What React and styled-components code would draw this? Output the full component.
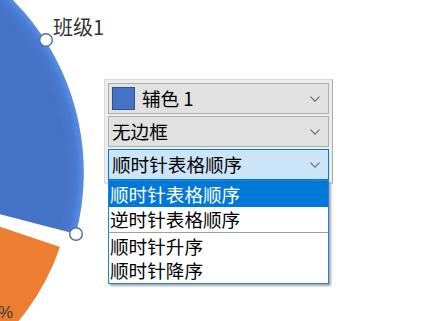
import React from "react";
import styled, { createGlobalStyle } from "styled-components";

const Global = createGlobalStyle`
  html, body { margin: 0; padding: 0; background: #ffffff; }
  * { box-sizing: border-box; }
`;

const CJK = `"Noto Sans CJK SC", "Noto Sans", sans-serif`;

const Canvas = styled.div`
  position: relative;
  width: 437px;
  height: 321px;
  overflow: hidden;
  background: #ffffff;
  font-family: ${CJK};
`;

const Chart = styled.svg`
  position: absolute;
  left: 0;
  top: 0;
`;

const SeriesLabel = styled.div`
  position: absolute;
  left: 53px;
  top: 15px;
  font-size: 20px;
  line-height: 24px;
  color: #333333;
  white-space: nowrap;
`;

const Editor = styled.div`
  position: absolute;
  left: 104px;
  top: 79px;
  width: 229px;
  height: 105px;
  display: flex;
  flex-direction: column;
  gap: 2px;
  padding: 3px 3px 0 3px;
  background: #ececec;
  border: 1px solid #dadada;
  border-right-color: #a9a9a9;
`;

const Combo = styled.div`
  height: 31px;
  display: flex;
  align-items: center;
  gap: 7px;
  padding: 0 8px 0 3px;
  background: ${(p) => (p.$active ? "#cce4f7" : "#e1e1e1")};
  border: 1px solid ${(p) => (p.$active ? "#0078d7" : "#adadad")};
  font-size: 18.6px;
  color: #000;
  white-space: nowrap;
`;

const ComboText = styled.span`
  flex: 1;
  line-height: 1;
`;

const Swatch = styled.span`
  width: 23px;
  height: 23px;
  flex: none;
  background: #4472c4;
  border: 1px solid #2f528f;
`;

const ListBox = styled.div`
  position: absolute;
  left: 108px;
  top: 180px;
  width: 221px;
  height: 104px;
  display: flex;
  flex-direction: column;
  background: #ffffff;
  border: 1px solid #2183d8;
  box-shadow: 2px 2px 2px rgba(0, 0, 0, 0.35);
`;

const Option = styled.div`
  height: ${(p) => p.$h}px;
  display: flex;
  align-items: center;
  padding-left: 1px;
  font-size: 18.6px;
  line-height: 1;
  white-space: nowrap;
  background: ${(p) => (p.$selected ? "#0078d7" : "#ffffff")};
  color: ${(p) => (p.$selected ? "#ffffff" : "#000000")};
`;

const Separator = styled.div`
  height: 2px;
  flex: none;
  border-top: 1px solid #a0a0a0;
  background: #ffffff;
`;

const Chevron = () => (
  <svg width="10" height="6" viewBox="0 0 10 6" style={{ flex: "none" }}>
    <polyline points="0.5,0.6 5,5.2 9.5,0.6" fill="none" stroke="#666666" strokeWidth="1.1" />
  </svg>
);

export default function App() {
  const cx = -161.6;
  const cy = 172.5;
  return (
    <Canvas>
      <Global />
      <Chart width="437" height="321" viewBox="0 0 437 321">
        <defs>
          <radialGradient id="blueG" gradientUnits="userSpaceOnUse" cx={cx} cy={cy} r="246">
            <stop offset="0" stopColor="#4472c4" />
            <stop offset="0.92" stopColor="#4472c4" />
            <stop offset="0.97" stopColor="#4a7bd1" />
            <stop offset="1" stopColor="#5b90e6" />
          </radialGradient>
        </defs>
        <path
          d={`M ${cx} ${cy} L 76 234 A 245.4 245.4 0 0 0 ${cx} ${cy - 245.4} Z`}
          fill="url(#blueG)"
        />
        <path
          d={`M ${cx} ${cy} L 60 247 A 232 232 0 0 1 ${cx} ${cy + 232} Z`}
          fill="#ed7d31"
        />
        <text x="13" y="318" textAnchor="end" fontSize="17" fill="#3a3a3a" fontFamily="Liberation Sans Narrow, Liberation Sans, sans-serif">4%</text>
        <circle cx="46" cy="40" r="6.3" fill="#ffffff" stroke="#4a6ea8" strokeWidth="1.4" />
        <circle cx="76" cy="234" r="6.3" fill="#ffffff" stroke="#4a6ea8" strokeWidth="1.4" />
      </Chart>
      <SeriesLabel>班级1</SeriesLabel>
      <Editor>
        <Combo>
          <Swatch />
          <ComboText>辅色 1</ComboText>
          <Chevron />
        </Combo>
        <Combo>
          <ComboText>无边框</ComboText>
          <Chevron />
        </Combo>
        <Combo $active>
          <ComboText>顺时针表格顺序</ComboText>
          <Chevron />
        </Combo>
      </Editor>
      <ListBox>
        <Option $selected $h={26}>顺时针表格顺序</Option>
        <Option $h={25}>逆时针表格顺序</Option>
        <Separator />
        <Option $h={24}>顺时针升序</Option>
        <Option $h={25}>顺时针降序</Option>
      </ListBox>
    </Canvas>
  );
}
